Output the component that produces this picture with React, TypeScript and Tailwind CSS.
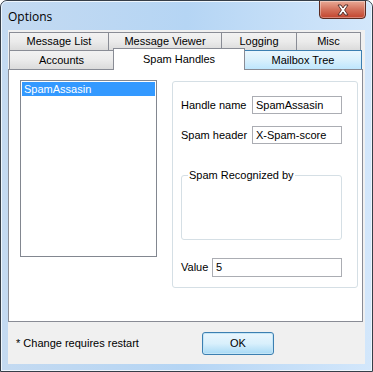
import React from "react";

const font = { fontFamily: '"Liberation Sans", Arial, sans-serif' };

function Tab({ w, label, h = 18 }: { w: number; label: string; h?: number }) {
  return (
    <div
      className="flex items-center justify-center border border-b-0 border-[#898c95] bg-gradient-to-b from-[#f2f2f2] via-[#ebebeb] to-[#dbdbdb] text-[11px] text-black -ml-px first:ml-0"
      style={{ width: w, height: h }}
    >
      {label}
    </div>
  );
}

function TextBox({ value, className }: { value: string; className: string }) {
  return (
    <div
      className={
        "flex items-center border border-[#abadb3] border-t-[#abadb3] bg-white pl-[3px] text-[11px] text-black " +
        className
      }
    >
      {value}
    </div>
  );
}

export default function App() {
  return (
    <div
      className="relative h-[372px] w-[373px] overflow-hidden rounded-t-[7px] border border-[#363e48] bg-gradient-to-r from-[#c4daf1] via-[#b5d5f4] to-[#d3e7fb]"
      style={font}
    >
      {/* inner white highlight */}
      <div className="pointer-events-none absolute inset-0 rounded-t-[6px] border border-[#eef6fd]" />
      {/* title bar */}
      <div className="relative flex h-[29px] items-start">
        <div className="pl-[7px] pt-[7px] text-[12px] text-black" style={{ fontFamily: '"Open Sans", "Liberation Sans", sans-serif' }}>
          Options
        </div>
        <div className="ml-auto mr-[6px] -mt-px flex h-[19px] w-[47px] items-center justify-center rounded-b-[4px] border border-[#5a2a20] bg-gradient-to-b from-[#e9a996] via-[#d3715c] to-[#c2422c] shadow-[inset_0_0_0_1px_rgba(255,255,255,0.35)]">
          <svg width="14" height="12" viewBox="0 0 14 12">
            <path
              d="M2 1 L5 1 L7 4 L9 1 L12 1 L8.6 6 L12 11 L9 11 L7 8 L5 11 L2 11 L5.4 6 Z"
              fill="#ffffff"
              stroke="#4a2520"
              strokeWidth="0.9"
            />
          </svg>
        </div>
      </div>

      {/* client area */}
      <div className="relative mx-[7px] flex h-[334px] flex-col bg-[#f0f0f0]">
        {/* tabs */}
        <div className="pt-[2px]">
          <div className="flex pl-[1px]">
            <Tab w={100} label="Message List" />
            <Tab w={114} label="Message Viewer" />
            <Tab w={76} label="Logging" />
            <Tab w={65} label="Misc" />
          </div>
          <div className="flex pl-[1px]">
            <Tab w={105} label="Accounts" h={19} />
            <div className="relative z-10 -mb-px -mt-[2px] flex h-[22px] w-[132px] -ml-px items-start justify-center border border-b-0 border-[#898c95] bg-white pt-[2px] text-[11px] text-black">
              Spam Handles
            </div>
            <div className="-ml-px flex h-[19px] w-[118px] items-center justify-center border border-b-0 border-[#3c7fb1] bg-gradient-to-b from-[#eaf6fd] via-[#d9f0fc] to-[#bee6fd] text-[11px] text-black">
              Mailbox Tree
            </div>
          </div>
        </div>

        {/* panel */}
        <div className="flex h-[253px] w-[355px] gap-[15px] border border-[#898c95] bg-white pl-[11px] pt-[10px]">
          {/* listbox */}
          <div className="h-[177px] w-[137px] border border-[#828790] bg-white p-px">
            <div className="flex h-[14px] items-center bg-[#3399ff] pl-[2px] text-[11px] text-white">
              SpamAssasin
            </div>
          </div>
          {/* group */}
          <div className="mt-px flex h-[207px] w-[186px] flex-col rounded-[3px] border border-[#d5dfe5] pl-[8px]">
            <div className="mt-[14px] flex items-center">
              <div className="w-[71px] text-[11px] text-black">Handle name</div>
              <TextBox value="SpamAssasin" className="h-[18px] w-[90px]" />
            </div>
            <div className="mt-[12px] flex items-center">
              <div className="w-[71px] text-[11px] text-black">Spam header</div>
              <TextBox value="X-Spam-score" className="h-[18px] w-[90px]" />
            </div>
            <div className="relative mt-[31px] h-[65px] w-[161px] rounded-[3px] border border-[#d5dfe5]">
              <div className="absolute -top-[8px] left-[6px] bg-white px-px text-[11px] leading-[14px] text-black">
                Spam Recognized by
              </div>
            </div>
            <div className="mt-[18px] flex items-center">
              <div className="w-[31px] text-[11px] text-black">Value</div>
              <TextBox value="5" className="h-[19px] w-[130px]" />
            </div>
          </div>
        </div>

        {/* footer */}
        <div className="flex flex-1 items-center">
          <div className="w-[194px] shrink-0 pl-[8px] text-[11px] text-black">* Change requires restart</div>
          <div className="mt-[1px] flex h-[23px] w-[72px] items-center justify-center rounded-[3px] border border-[#3c7fb1] bg-gradient-to-b from-[#eaf6fd] via-[#d9f0fc] to-[#a7d9f5] text-[11px] text-black shadow-[inset_0_0_0_1px_#c4e5f6]">
            OK
          </div>
        </div>
      </div>
    </div>
  );
}
